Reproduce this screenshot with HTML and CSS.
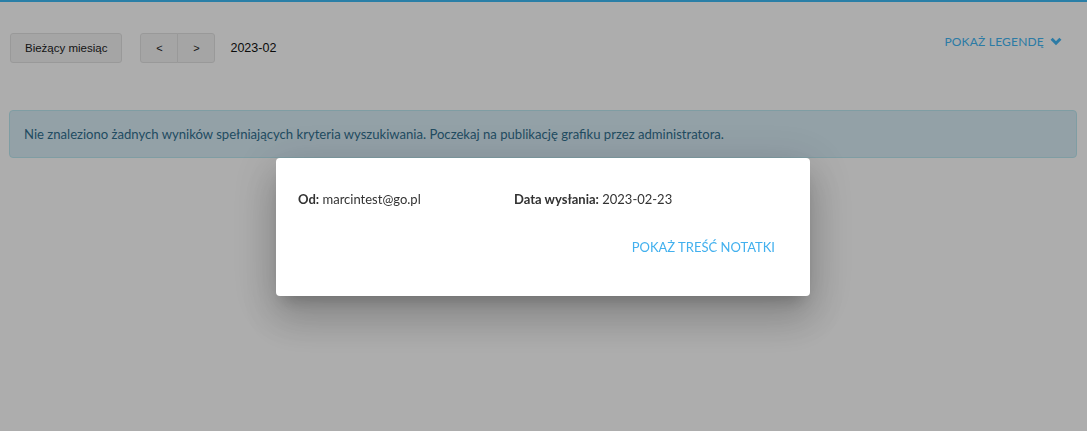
FILE: index.html
```html
<!DOCTYPE html>
<html lang="pl">
<head>
<meta charset="utf-8">
<link rel="stylesheet" href="styles.css">
</head>
<body>
<div class="topbar"></div>
<div class="page">
  <div class="toolbar">
    <div class="left">
      <button class="btn">Bieżący miesiąc</button>
      <div class="btn-group">
        <button class="btn nav">&lt;</button>
        <button class="btn nav">&gt;</button>
      </div>
      <span class="date">2023-02</span>
    </div>
    <a class="legend">POKAŻ LEGENDĘ
      <svg width="12" height="9" viewBox="0 0 12 9"><path d="M1.6 1.8 L6 6.2 L10.4 1.8" fill="none" stroke="currentColor" stroke-width="3"/></svg>
    </a>
  </div>
  <div class="alert">Nie znaleziono żadnych wyników spełniających kryteria wyszukiwania. Poczekaj na publikację grafiku przez administratora.</div>
</div>
<div class="overlay">
  <div class="modal">
    <div class="meta">
      <div class="col"><b>Od:</b> marcintest@go.pl</div>
      <div class="col"><b>Data wysłania:</b> 2023-02-23</div>
    </div>
    <div class="actions"><a class="link">POKAŻ TREŚĆ NOTATKI</a></div>
  </div>
</div>
</body>
</html>
```
FILE: styles.css
```css
html, body { margin: 0; padding: 0; background: #fff; }
body { font-family: Lato, "Open Sans", sans-serif; color: #333; width: 1087px; height: 431px; overflow: hidden; }
.topbar { height: 2px; background: #3fbbf7; }
.page { padding: 31px 10px 0 9px; }
.toolbar { display: flex; justify-content: space-between; align-items: flex-start; height: 30px; }
.left { display: flex; align-items: center; gap: 18px; padding-left: 1px; }
.btn {
  font-family: "Liberation Sans", Arial, sans-serif; font-size: 11.5px; color: #222;
  background: #f4f4f4; border: 1px solid #e2e2e2; border-radius: 3px;
  height: 30px; padding: 0 14px; margin: 0; cursor: pointer;
}
.btn-group { display: flex; }
.btn.nav { width: 38px; padding: 0; font-size: 11px; }
.btn-group .nav:first-child { border-radius: 3px 0 0 3px; }
.btn-group .nav:last-child { border-radius: 0 3px 3px 0; margin-left: -1px; }
.date { font-family: "Liberation Sans", Arial, sans-serif; font-size: 12.5px; color: #111; margin-left: -3px; }
.legend { color: #41b6f4; font-size: 12px; display: flex; align-items: center; gap: 6px; margin-top: 1px; margin-right: 15px; letter-spacing: 0.2px; }
.alert {
  margin-top: 47px; height: 48px; box-sizing: border-box;
  background: #d9edf7; border: 1px solid #bce8f1; border-radius: 4px;
  color: #31708f; font-size: 13.1px; padding: 15px 14px;
}
.overlay {
  position: fixed; inset: 0; background: rgba(0,0,0,0.32);
  display: flex; justify-content: flex-start; align-items: flex-start; padding: 158px 0 0 276px;
}
.modal {
  width: 534px; height: 138px; box-sizing: border-box; background: #fff; border-radius: 4px;
  padding: 33px 35px 0 22px;
  box-shadow: 0 11px 15px -7px rgba(0,0,0,.2), 0 24px 38px 3px rgba(0,0,0,.14), 0 9px 46px 8px rgba(0,0,0,.12);
}
.meta { display: grid; grid-template-columns: 216px 1fr; font-size: 13px; color: #333; }
.meta b { font-weight: 700; color: #333; }
.actions { display: flex; justify-content: flex-end; margin-top: 32px; }
.link { color: #42b0ee; font-size: 13px; }
```
